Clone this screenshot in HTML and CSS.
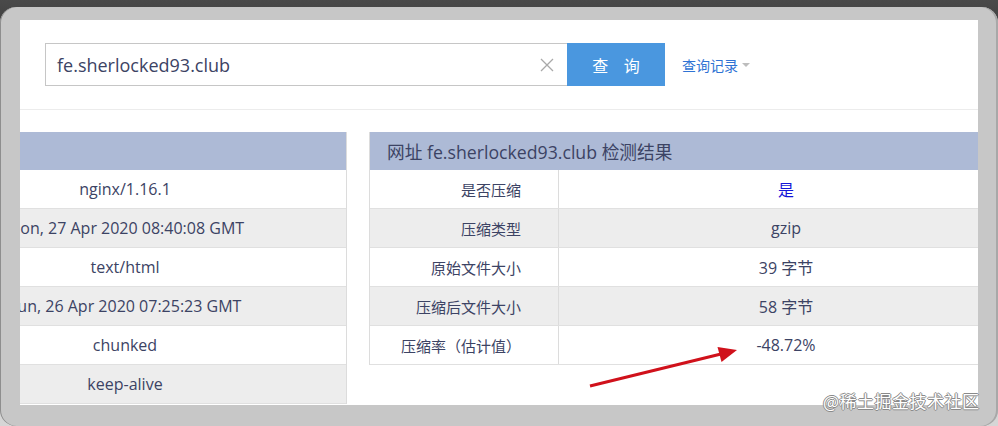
FILE: index.html
```html
<!DOCTYPE html>
<html lang="zh">
<head>
<meta charset="utf-8">
<link rel="stylesheet" href="styles.css">
</head>
<body>
<div class="window">
  <div class="page">
    <div class="search">
      <div class="input">
        <span class="input-text">fe.sherlocked93.club</span>
        <svg class="clear" width="14" height="14" viewBox="0 0 14 14"><path d="M1 1L13 13M13 1L1 13" stroke="#a9a9a9" stroke-width="1.3" fill="none"/></svg>
      </div>
      <div class="btn">查 询</div>
      <div class="history">查询记录<span class="caret"></span></div>
    </div>
    <div class="tables">
      <div class="left-panel">
        <div class="left-inner">
          <div class="thead"></div>
          <div class="row">nginx/1.16.1</div>
          <div class="row alt">Mon, 27 Apr 2020 08:40:08 GMT</div>
          <div class="row">text/html</div>
          <div class="row alt">Sun, 26 Apr 2020 07:25:23 GMT</div>
          <div class="row">chunked</div>
          <div class="row alt">keep-alive</div>
        </div>
      </div>
      <div class="right-panel">
        <div class="right-inner">
          <div class="thead title">网址 fe.sherlocked93.club 检测结果</div>
          <div class="rrow"><div class="label">是否压缩</div><div class="value yes">是</div></div>
          <div class="rrow alt"><div class="label">压缩类型</div><div class="value">gzip</div></div>
          <div class="rrow"><div class="label">原始文件大小</div><div class="value">39 字节</div></div>
          <div class="rrow alt"><div class="label">压缩后文件大小</div><div class="value">58 字节</div></div>
          <div class="rrow"><div class="label">压缩率（估计值）</div><div class="value">-48.72%</div></div>
        </div>
      </div>
    </div>
  </div>
</div>
<svg class="arrow" width="998" height="426" viewBox="0 0 998 426">
  <line x1="590" y1="386" x2="721" y2="354" stroke="#d0111b" stroke-width="3"/>
  <polygon points="737,350 717.5,347 721.5,362" fill="#d0111b"/>
</svg>
<div class="watermark">@稀土掘金技术社区</div>
</body>
</html>
```

FILE: styles.css
```css
html, body {
  margin: 0;
  padding: 0;
}
body {
  width: 998px;
  height: 426px;
  overflow: hidden;
  position: relative;
  background: linear-gradient(#4a4a4a 0, #3a3a3a 40px, #bdbdbd 60px, #d6d6d6 100%);
  font-family: "Open Sans", "Noto Sans CJK SC", sans-serif;
  color: #3c4364;
}
.window {
  margin-top: 7px;
  height: 419px;
  box-sizing: border-box;
  border-radius: 16px;
  background: #c7c7c7;
  box-shadow: inset 1px 0 0 #8e8e8e, inset -2px 0 0 #a8a8a8;
  padding: 13px 20px 21px 20px;
}
.page {
  height: 385px;
  background: #fff;
  overflow: hidden;
  position: relative;
}
.search {
  height: 66px;
  border-bottom: 1px solid #ececec;
  padding: 23px 0 0 25px;
  display: flex;
  align-items: flex-start;
}
.input {
  width: 522px;
  height: 43px;
  box-sizing: border-box;
  border: 1px solid #c6c6c6;
  border-right: none;
  display: flex;
  align-items: center;
  padding-left: 11px;
  padding-right: 13px;
}
.input-text {
  flex: 1;
  font-size: 18px;
  color: #3c4364;
}
.clear {
  display: block;
}
.btn {
  width: 98px;
  height: 43px;
  background: #4a97df;
  color: #fff;
  font-size: 16px;
  display: flex;
  align-items: center;
  justify-content: center;
  word-spacing: 12px;
  font-family: "Noto Sans CJK SC", sans-serif;
}
.history {
  margin-left: 17px;
  height: 43px;
  display: flex;
  align-items: center;
  font-size: 14px;
  color: #2f73d4;
  font-family: "Noto Sans CJK SC", sans-serif;
}
.caret {
  width: 0;
  height: 0;
  margin-left: 4px;
  margin-top: 1px;
  border-left: 4px solid transparent;
  border-right: 4px solid transparent;
  border-top: 4px solid #bdbdbd;
}
.tables {
  margin-top: 22px;
  display: flex;
  align-items: flex-start;
}
.left-panel {
  width: 326px;
  flex: none;
  overflow: hidden;
  border-right: 1px solid #dcdcdc;
}
.left-inner {
  margin-left: -116px;
  width: 442px;
}
.thead {
  height: 38px;
  background: #adbad6;
}
.row {
  height: 38px;
  border-bottom: 1px solid #e0e0e0;
  display: flex;
  align-items: center;
  justify-content: center;
  font-size: 16px;
  white-space: nowrap;
}
.alt {
  background: #ededed;
}
.right-panel {
  margin-left: 22px;
  flex: 1;
  min-width: 0;
  overflow: hidden;
}
.right-inner {
  width: 643px;
  border-left: 1px solid #dcdcdc;
}
.title {
  display: flex;
  align-items: center;
  padding-left: 17px;
  font-size: 17.7px;
  color: #3c4364;
}
.rrow {
  display: flex;
  height: 38px;
  border-bottom: 1px solid #e0e0e0;
  font-size: 16px;
}
.label {
  width: 189px;
  box-sizing: border-box;
  border-right: 1px solid #dcdcdc;
  display: flex;
  align-items: center;
  justify-content: flex-end;
  padding-right: 37px;
  font-size: 15px;
  font-family: "Noto Sans CJK SC", sans-serif;
}
.value {
  width: 454px;
  display: flex;
  align-items: center;
  justify-content: center;
}
.yes {
  color: #1515d8;
  font-family: "Noto Sans CJK SC", sans-serif;
}
.arrow {
  position: absolute;
  left: 0;
  top: 0;
  pointer-events: none;
}
.watermark {
  position: absolute;
  left: 823px;
  top: 388px;
  font-size: 17px;
  font-family: "Noto Sans CJK SC", sans-serif;
  color: #fff;
  text-shadow: 1px 0 0 #8a8a8a, -1px 0 0 #8a8a8a, 0 1px 0 #8a8a8a, 0 -1px 0 #8a8a8a;
  letter-spacing: 0.5px;
}
```
